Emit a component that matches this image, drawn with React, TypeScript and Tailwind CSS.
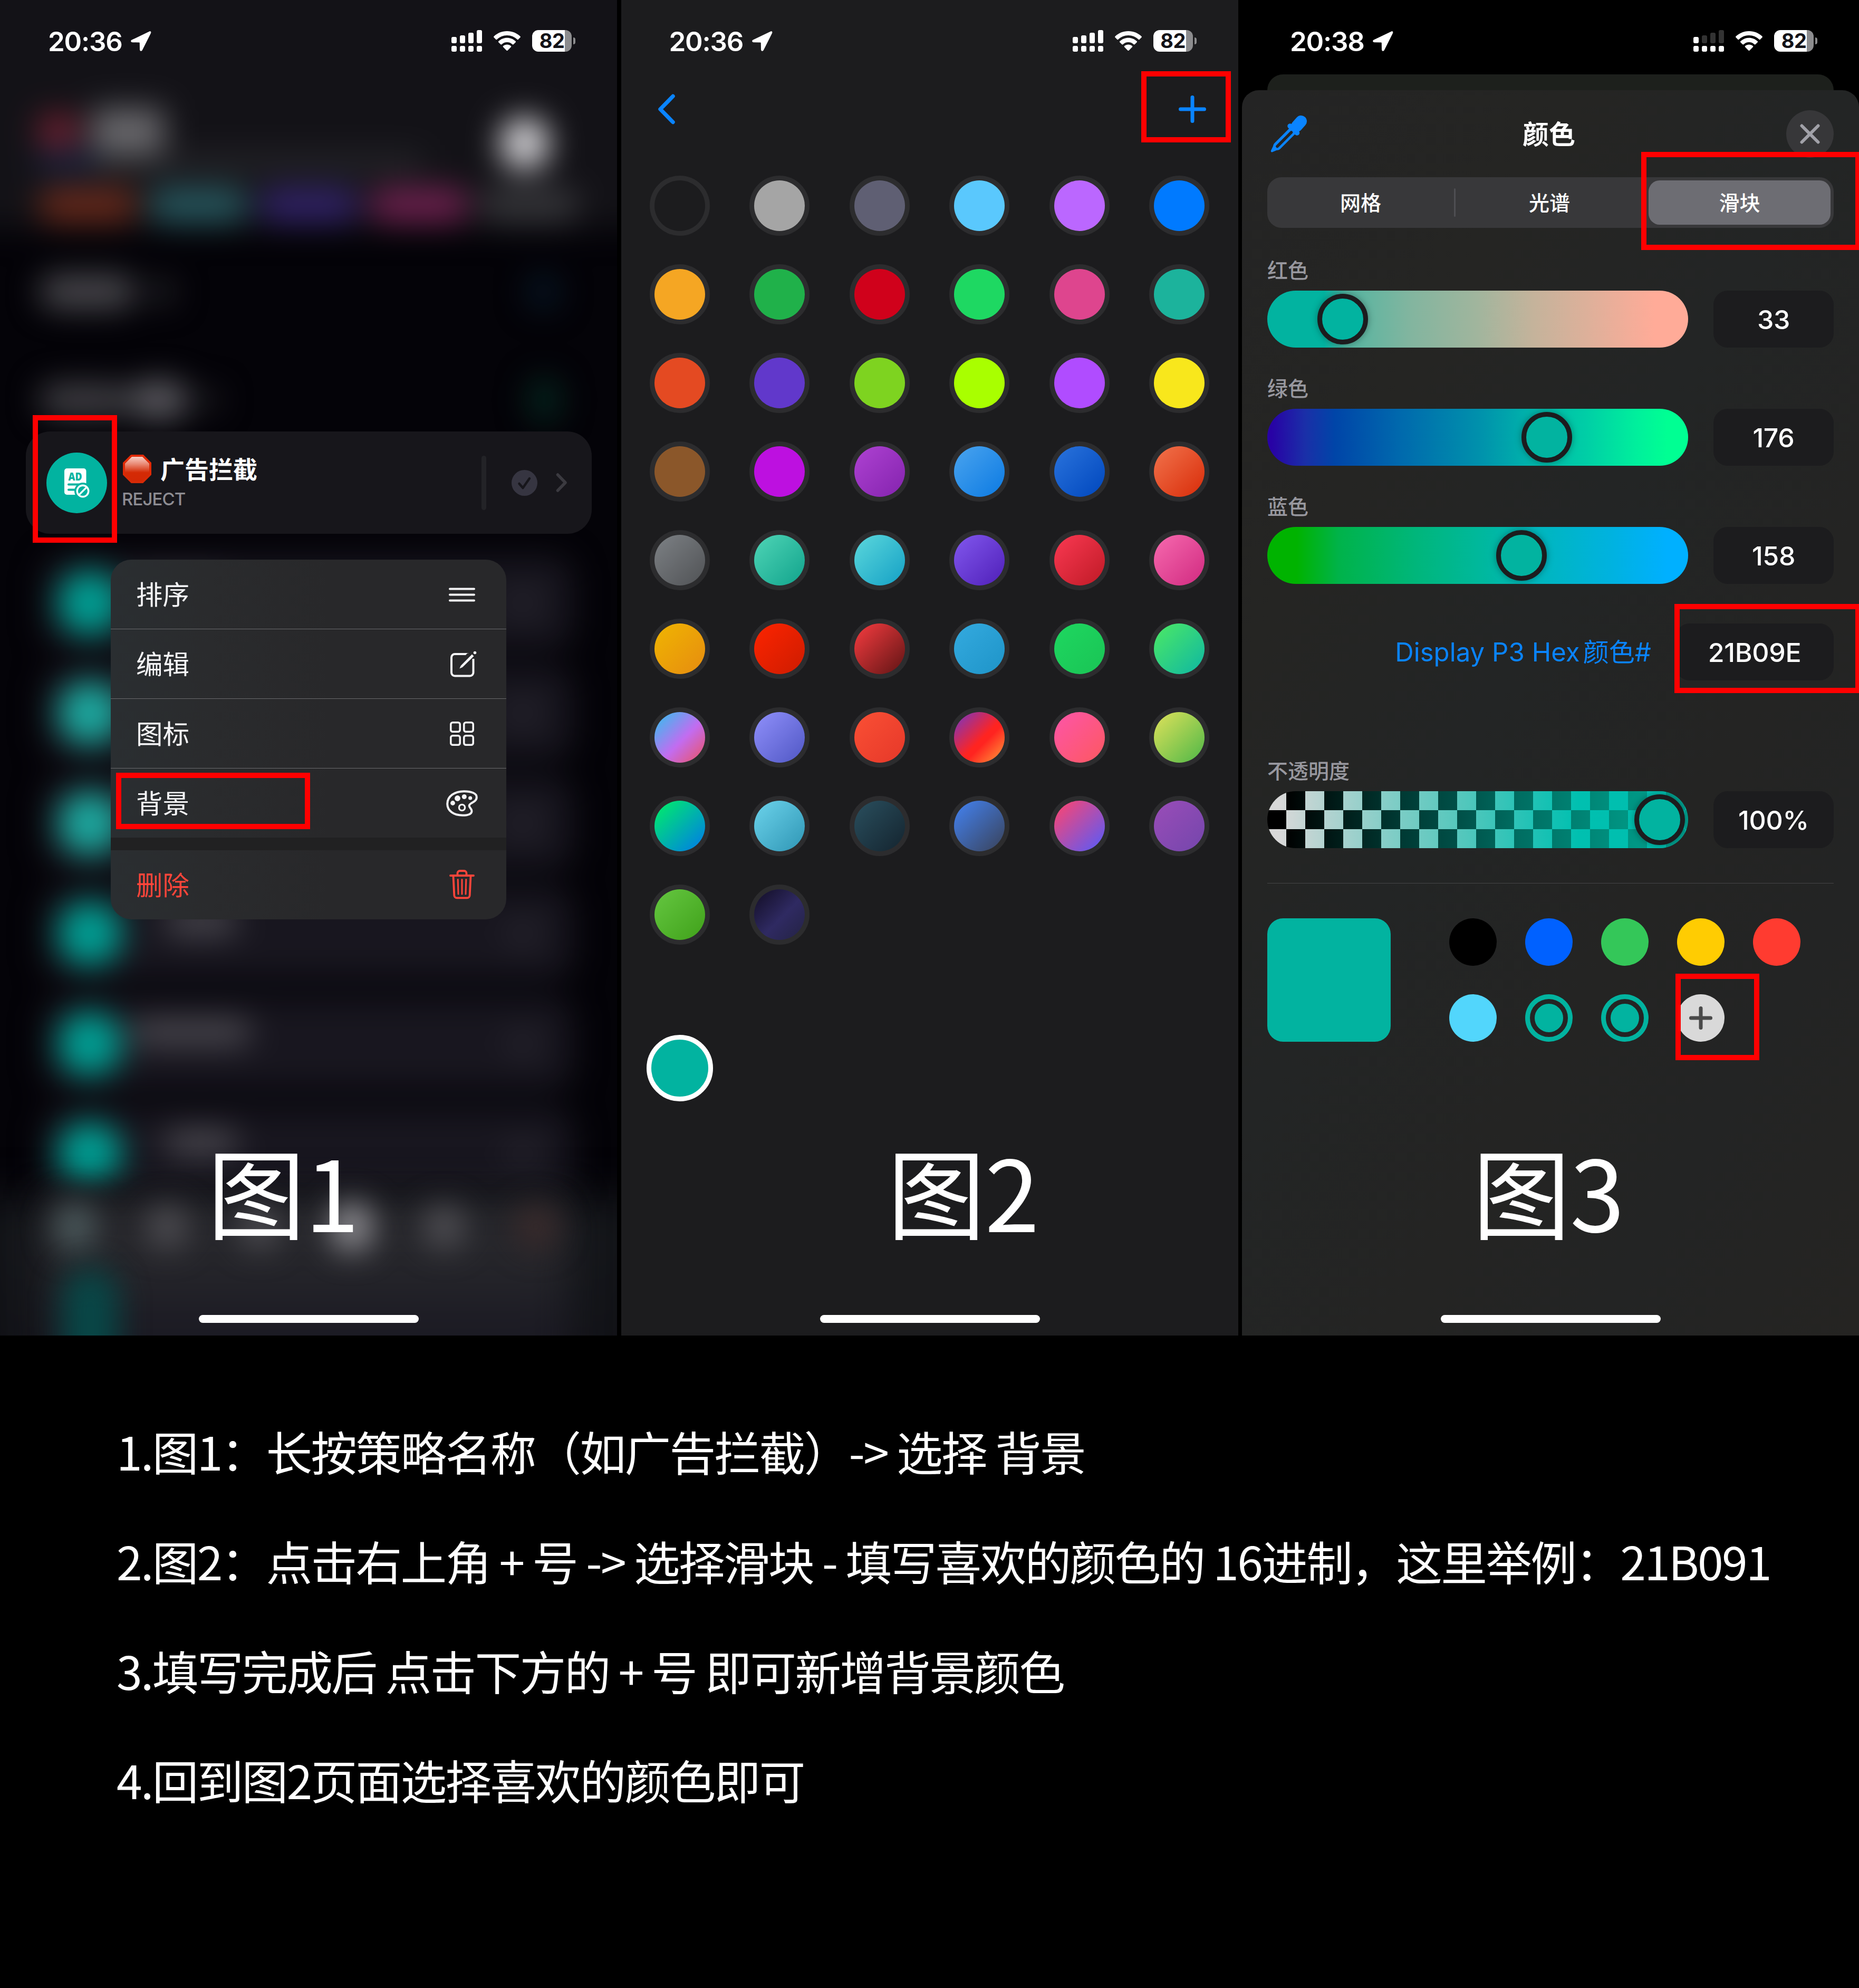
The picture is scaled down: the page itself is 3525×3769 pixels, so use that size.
import React from "react";

const LATIN = "font-['Inter','Noto_Sans_CJK_SC',sans-serif]";
const CJK = "font-['Noto_Sans_CJK_SC',sans-serif]";

function LocationArrow() {
  return (
    <svg className="h-[38px] w-[39px]" viewBox="0 0 39 38" fill="#fff">
      <path d="M35.500.6 2 16.600C-.8 18-.2 21.200 3 21.300l12.500.200c.9 0 1.300.4 1.300 1.300l.2 12.200c.1 3.300 3.500 3.800 4.900 1L38 4C39.200 1.400 37.600-.4 35.500.6Z" />
    </svg>
  );
}

function Signal({ weak }: { weak?: boolean }) {
  const tops = [13, 10, 5, 0];
  return (
    <svg className="h-[41px] w-[58px]" viewBox="0 0 58 41">
      {tops.map((t, i) => (
        <g key={i} fill="#fff">
          <rect x={i * 16} y={t} width="10" height={25 - t} rx="3" fill={weak && i > 0 ? "#333333" : "#fff"} />
          <rect x={i * 16} y="30" width="10" height="11" rx="3" />
        </g>
      ))}
    </svg>
  );
}

function Wifi() {
  return (
    <svg className="h-[37px] w-[51px]" viewBox="0 0 51 37" fill="#fff">
      <path d="M25.500 0C15.900 0 7.100 3.700.7 9.700c-.9.9-.9 1.500-.1 2.300l3.700 3.700c.7.7 1.400.7 2.100.1C11.400 11 18.100 8.100 25.500 8.100s14.100 2.900 19.100 7.700c.7.600 1.400.6 2.100-.1l3.700-3.700c.8-.8.8-1.400-.1-2.300C43.900 3.700 35.100 0 25.500 0Z" />
      <path d="M25.500 12.800c-6.200 0-11.800 2.400-16 6.300-.8.700-.8 1.500-.1 2.200l3.800 3.800c.6.6 1.300.6 2 .1 2.700-2.600 6.300-4.200 10.300-4.200s7.600 1.600 10.300 4.200c.7.500 1.400.5 2-.1l3.800-3.800c.7-.7.7-1.500-.1-2.200-4.200-3.900-9.800-6.300-16-6.300Z" />
      <path d="M25.500 25.500c-2.800 0-5.300 1-7.200 2.600-.8.700-.8 1.400-.1 2.100l6.100 6.200c.8.8 1.600.8 2.400 0l6.100-6.200c.7-.7.700-1.400-.1-2.100-1.900-1.600-4.400-2.600-7.200-2.600Z" />
    </svg>
  );
}

function Battery() {
  return (
    <div className="flex items-center gap-[3px]">
      <div className="flex h-[41px] w-[75px] items-center justify-center rounded-[12px] bg-[linear-gradient(90deg,#fff_62px,#8c8c8e_62px)]">
        <span className="text-[38px] leading-[41px] font-bold tracking-[-0.5px] text-[#131217]">82</span>
      </div>
      <div className="h-[13px] w-[4px] rounded-r-full bg-[#8c8c8e]" />
    </div>
  );
}

function StatusBar({ time, weak }: { time: string; weak?: boolean }) {
  return (
    <div className="flex h-[141px] shrink-0 items-start justify-between pt-[57px] pr-[79px] pl-[91px]">
      <div className="flex h-[42px] items-center">
        <span className="w-[157px] text-[51px] leading-none font-semibold tracking-[-1.200px] text-white">{time}</span>
        <LocationArrow />
      </div>
      <div className="flex h-[41px] items-center">
        <Signal weak={weak} />
        <div className="ml-[22px]">
          <Wifi />
        </div>
        <div className="ml-[22px]">
          <Battery />
        </div>
      </div>
    </div>
  );
}

function Mark({ className }: { className: string }) {
  return <div className={`absolute border-[10px] border-[#ff0000] ${className}`} />;
}

function HomeBar() {
  return <div className="absolute top-[2493px] left-[377px] h-[15px] w-[417px] rounded-full bg-white" />;
}

function FigureLabel({ text, className }: { text: string; className: string }) {
  return (
    <div className={`absolute top-[2161px] text-[186px] leading-[188px] tracking-[-1px] whitespace-nowrap text-white ${CJK} ${className}`}>
      {text}
    </div>
  );
}

/* ---------- Panel 1 ---------- */

function BlurredRow({ text, bright }: { text: string; bright?: boolean }) {
  return (
    <div className="mb-[34px] flex h-[175px] shrink-0 items-center rounded-[40px] bg-[#18161f] pl-[25px]">
      <div className={`h-[122px] w-[122px] rounded-full ${bright ? "bg-[#1ca89f]" : "bg-[#009e93]"}`} />
      <div className={`mb-[44px] h-[50px] rounded-full bg-[#4a484f] ${text}`} />
      <div className="mr-[65px] ml-auto h-[60px] w-[60px] rounded-full bg-[#25232c]" />
    </div>
  );
}

function BlurredPage() {
  return (
    <div className="absolute inset-0 overflow-hidden bg-[#040308]">
      <div className="flex h-[2532px] flex-col blur-[30px]">
        <div className="-mx-[100px] -mt-[100px] flex h-[533px] shrink-0 flex-col bg-[#131217] px-[172px] pt-[308px]">
          <div className="flex h-[82px] items-center">
            <div className="h-[66px] w-[78px] rounded-[20px] bg-[#6b2030]" />
            <div className="ml-[24px] h-[88px] w-[138px] rounded-[14px] bg-[#68676b]" />
            <div className="mt-[46px] mr-[56px] ml-auto h-[100px] w-[94px] shrink-0 rounded-full bg-[#d2d1d5]" />
          </div>
          <div className="flex items-center">
            <div className="h-[38px] w-[110px] bg-[#152340]" />
            <div className="h-[36px] w-[620px] bg-[#26262a]" />
          </div>
          <div className="mt-[28px] flex gap-[20px]">
            <div className="h-[66px] w-[190px] rounded-full bg-[#67291b]" />
            <div className="h-[66px] w-[190px] rounded-full bg-[#27585f]" />
            <div className="h-[66px] w-[190px] rounded-full bg-[#312268]" />
            <div className="h-[66px] w-[190px] rounded-full bg-[#6d204e]" />
            <div className="h-[66px] w-[190px] rounded-full bg-[#353539]" />
          </div>
        </div>
        <div className="flex h-[240px] shrink-0 items-center pl-[75px]">
          <div className="h-[64px] w-[182px] rounded-full bg-[#4a494e]" />
          <div className="ml-[20px] h-[46px] w-[56px] rounded-full bg-[#242328]" />
          <div className="mr-[110px] ml-auto h-[66px] w-[60px] rounded-full bg-[#061726]" />
        </div>
        <div className="flex h-[170px] shrink-0 items-center pl-[75px]">
          <div className="h-[62px] w-[170px] rounded-full bg-[#414045]" />
          <div className="h-[72px] w-[112px] rounded-full bg-[#5c5b61]" />
          <div className="ml-[20px] h-[40px] w-[40px] rounded-full bg-[#242328]" />
          <div className="mr-[108px] ml-auto h-[84px] w-[60px] rounded-full bg-[#05261f]" />
        </div>
        <div className="mx-[84px] flex flex-col pt-[212px]">
          <BlurredRow text="ml-[20px] w-[180px]" />
          <BlurredRow text="ml-[20px] w-[180px]" bright />
          <BlurredRow text="ml-[20px] w-[180px]" bright />
          <BlurredRow text="ml-[80px] w-[140px]" />
          <BlurredRow text="ml-[16px] w-[230px]" />
          <BlurredRow text="ml-[80px] w-[140px]" />
        </div>
      </div>
      <div className="absolute top-[2270px] left-[-60px] h-[400px] w-[1290px] bg-[linear-gradient(180deg,#15171b_0%,#111116_100%)] blur-[40px]" />
      <div className="absolute top-[2275px] left-[80px] h-[380px] w-[1000px] bg-[linear-gradient(180deg,#27272c_0%,#25252a_35%,#1b1a23_65%)] blur-[34px]" />
      <div className="absolute top-[2290px] left-[104px] flex h-[72px] items-center gap-[99px] blur-[30px]">
        <div className="h-[90px] w-[76px] rounded-full bg-[#4f5f61]" />
        <div className="h-[80px] w-[76px] rounded-full bg-[#525156]" />
        <div className="h-[80px] w-[76px] rounded-full bg-[#525156]" />
        <div className="h-[92px] w-[76px] rounded-full bg-[#96959a]" />
        <div className="h-[80px] w-[76px] rounded-full bg-[#545358]" />
        <div className="h-[80px] w-[76px] rounded-full bg-[#3c2b2b]" />
      </div>
      <div className="absolute top-[2405px] left-[118px] h-[240px] w-[106px] rounded-[53px] bg-[#084747] blur-[28px]" />
    </div>
  );
}

function AdIcon() {
  return (
    <div className="flex h-[115px] w-[115px] items-center justify-center rounded-full bg-[#02b3a0]">
      <svg className="h-[115px] w-[115px]" viewBox="0 0 115 115">
        <rect x="34" y="30" width="41.500" height="50" rx="5" fill="#fff" />
        <text x="41.500" y="53" fontSize="21" fontWeight="800" fill="#02b3a0" textLength="26" lengthAdjust="spacingAndGlyphs" fontFamily="Open Sans, sans-serif">
          AD
        </text>
        <path d="M42 60.500h34M42 70.500h20" stroke="#02b3a0" strokeWidth="4" strokeLinecap="round" />
        <circle cx="69" cy="73" r="16" fill="#02b3a0" />
        <circle cx="69" cy="73" r="10.800" fill="none" stroke="#fff" strokeWidth="3.400" />
        <path d="m61.500 80.500 15-15" stroke="#fff" strokeWidth="3.200" />
      </svg>
    </div>
  );
}

function StopSign() {
  return (
    <svg className="h-[54px] w-[54px]" viewBox="0 0 54 54">
      <defs>
        <linearGradient id="stop" x1="0" y1="0" x2="0" y2="1">
          <stop offset="0" stopColor="#f9cdc4" />
          <stop offset=".3" stopColor="#e98a75" />
          <stop offset=".65" stopColor="#d42a05" />
          <stop offset="1" stopColor="#d32805" />
        </linearGradient>
      </defs>
      <path d="M15.800 0h22.400L54 15.800v22.400L38.200 54H15.800L0 38.200V15.800Z" fill="#d82a06" />
      <path d="M17 4h20l13 13v19.500L37 50H17L4 36.500V17Z" fill="url(#stop)" />
      <path d="M15.800 1.500h22.400l14.300 14.300v22M1.500 38V15.800L15.800 1.500" fill="none" stroke="#e22a06" strokeWidth="3" />
    </svg>
  );
}

const ICON = "h-[60px] w-[60px]";

function MenuLines() {
  return (
    <svg className={ICON} viewBox="0 0 60 60" stroke="#f5f5f7" strokeWidth="4" strokeLinecap="round">
      <path d="M7 19.500h46M7 30.500h46M7 41.500h46" />
    </svg>
  );
}

function MenuEdit() {
  return (
    <svg className={ICON} viewBox="0 0 60 60" fill="none" stroke="#f5f5f7" strokeWidth="4">
      <path d="M42 11H16.500a6.500 6.500 0 0 0-6.500 6.500V46a6.500 6.500 0 0 0 6.500 6.500H45a6.500 6.500 0 0 0 6.500-6.500V20" />
      <path d="M36.500 20 44 12" stroke="#29292b" strokeWidth="9" />
      <path d="m49 11.500 3.500 3.500L31 36l-5.700 2.500L27.800 33Z" fill="#f5f5f7" stroke="none" />
      <circle cx="54.500" cy="8.500" r="2.800" fill="#f5f5f7" stroke="none" />
    </svg>
  );
}

function MenuGrid() {
  return (
    <svg className={ICON} viewBox="0 0 60 60" fill="none" stroke="#f5f5f7" strokeWidth="3.600">
      <rect x="8.800" y="8.800" width="17.400" height="17.400" rx="3.500" />
      <rect x="33.800" y="8.800" width="17.400" height="17.400" rx="3.500" />
      <rect x="8.800" y="33.800" width="17.400" height="17.400" rx="3.500" />
      <rect x="33.800" y="33.800" width="17.400" height="17.400" rx="3.500" />
    </svg>
  );
}

function MenuPalette() {
  return (
    <svg className={ICON} viewBox="0 0 60 60" fill="none" stroke="#f5f5f7" strokeWidth="4">
      <path d="M34 7.200C16 7.200 2.200 16.500 2.200 31 2.200 44.500 14.500 52.800 31 52.800c11.500 0 17.500-3 17.500-8.300 0-4.500-4.800-6-4.800-9.700 0-6.800 14.100-5.800 14.100-16.500C57.800 11 47.500 7.200 34 7.200Z" />
      <circle cx="30" cy="38" r="5.600" strokeWidth="3.300" />
      <g fill="#f5f5f7" stroke="none">
        <circle cx="12.500" cy="29.500" r="4.400" />
        <circle cx="21.500" cy="20.500" r="5.400" />
        <circle cx="34.300" cy="17.500" r="4.500" />
        <circle cx="45.700" cy="20" r="3.600" />
      </g>
    </svg>
  );
}

function MenuTrash() {
  return (
    <svg className={ICON} viewBox="0 0 60 60" fill="none" stroke="#ff453a" strokeWidth="3.800" strokeLinecap="round">
      <path d="M8 12h44M21.500 11.500V7.500a4.500 4.500 0 0 1 4.500-4.500h8a4.500 4.500 0 0 1 4.500 4.500v4M13.500 13l1.800 36.500a5 5 0 0 0 5 4.800h19.400a5 5 0 0 0 5-4.800L46.500 13" />
      <path d="m22.200 19.500.8 27.500M30 19.500V47M37.800 19.500 37 47" strokeWidth="3" />
    </svg>
  );
}

function MenuRow({ label, icon, danger, line }: { label: string; icon: React.ReactNode; danger?: boolean; line?: boolean }) {
  return (
    <div className={line ? "border-b border-[#6a6a6d]" : ""}>
      <div className="flex h-[131px] items-center justify-between pr-[54px] pl-[48px]">
        <span className={`pb-[4px] text-[50.500px] leading-none ${CJK} ${danger ? "text-[#ff453a]" : "text-[#f5f5f7]"}`}>{label}</span>
        {icon}
      </div>
    </div>
  );
}

function PanelPolicies() {
  return (
    <div className="relative h-[2532px] w-[1170px] shrink-0 overflow-hidden">
      <BlurredPage />
      <div className="relative flex flex-col">
        <StatusBar time="20:36" />
        <div className="mt-[677px] ml-[49px] flex h-[194px] w-[1073px] items-center rounded-[46px] bg-[#17161b] pr-[46px] pl-[39px]">
          <AdIcon />
          <div className="ml-[30px] flex flex-col">
            <div className="mt-[-6px] flex h-[60px] items-center">
              <StopSign />
              <span className={`ml-[17px] pb-[4px] text-[46px] leading-none font-bold text-white ${CJK}`}>广告拦截</span>
            </div>
            <span className="mt-[8px] ml-[-2px] text-[33px] leading-[38px] font-medium tracking-[-0.9px] text-[#8e8d93]">REJECT</span>
          </div>
          <div className="ml-auto h-[103px] w-[9px] rounded-full bg-[#232327]" />
          <svg className="ml-[48px] h-[49px] w-[49px]" viewBox="0 0 49 49">
            <circle cx="24.500" cy="24.500" r="24.500" fill="#363541" />
            <path d="m14.500 26 7 8L34 16" fill="none" stroke="#17161b" strokeWidth="4.500" strokeLinecap="round" strokeLinejoin="round" />
          </svg>
          <svg className="ml-[35px] h-[36px] w-[22px]" viewBox="0 0 22 36" fill="none">
            <path d="m3.500 3 14.500 15L3.500 33" stroke="#3b3a40" strokeWidth="5.500" strokeLinecap="round" strokeLinejoin="round" />
          </svg>
        </div>
        <div className="mt-[49px] ml-[210px] w-[750px] overflow-hidden rounded-[39px] bg-[linear-gradient(90deg,#2a2e31_0%,#2a2b2d_25%,#28282a_55%,#28282a_100%)]">
          <MenuRow label="排序" icon={<MenuLines />} line />
          <MenuRow label="编辑" icon={<MenuEdit />} line />
          <MenuRow label="图标" icon={<MenuGrid />} line />
          <MenuRow label="背景" icon={<MenuPalette />} />
          <div className="h-[24px] bg-[#212122]" />
          <MenuRow label="删除" icon={<MenuTrash />} danger />
        </div>
      </div>
      <Mark className="top-[787px] left-[62px] h-[242px] w-[160px]" />
      <Mark className="top-[1465px] left-[220px] h-[107px] w-[368px]" />
      <FigureLabel text="图1" className="left-[393px]" />
      <HomeBar />
    </div>
  );
}

/* ---------- Panel 2 ---------- */

const SWATCHES = [
  "bg-[#1c1c1e]", "bg-[#a5a5a5]", "bg-[#5f5f73]", "bg-[#5ac8fd]", "bg-[#bb67ff]", "bg-[#007aff]",
  "bg-[#f5a623]", "bg-[#20b14a]", "bg-[#d0011b]", "bg-[#1ed862]", "bg-[#de458e]", "bg-[#1cb39c]",
  "bg-[#e44a22]", "bg-[#6138cb]", "bg-[#7ed320]", "bg-[#a9ff00]", "bg-[#b04cff]", "bg-[#f8e71c]",
  "bg-[#8b572a]", "bg-[#bd10e0]",
  "bg-[linear-gradient(135deg,#ae42d2_0%,#8423ae_100%)]",
  "bg-[linear-gradient(135deg,#4aa4ef_0%,#0c7ae2_100%)]",
  "bg-[linear-gradient(135deg,#2a73dc_0%,#0047bd_100%)]",
  "bg-[linear-gradient(135deg,#f2734c_0%,#d82c09_100%)]",
  "bg-[linear-gradient(135deg,#7d8185_0%,#505255_100%)]",
  "bg-[linear-gradient(135deg,#4fd5b6_0%,#11a38c_100%)]",
  "bg-[linear-gradient(135deg,#5cd8dc_0%,#14a0c5_100%)]",
  "bg-[linear-gradient(135deg,#8258ee_0%,#4f1fb8_100%)]",
  "bg-[linear-gradient(135deg,#fa3952_0%,#bf1a26_100%)]",
  "bg-[linear-gradient(135deg,#f76aaf_0%,#d02a80_100%)]",
  "bg-[linear-gradient(135deg,#f0b501_0%,#e68c10_100%)]",
  "bg-[linear-gradient(135deg,#fd2400_0%,#cd1c00_100%)]",
  "bg-[linear-gradient(135deg,#f03a3e_5%,#661616_95%)]",
  "bg-[linear-gradient(135deg,#34aadf_0%,#1e94c8_100%)]",
  "bg-[linear-gradient(135deg,#1ed760_0%,#1ac455_100%)]",
  "bg-[linear-gradient(135deg,#4ae767_5%,#11b9a0_95%)]",
  "bg-[linear-gradient(135deg,#39bdef_5%,#c26cf0_55%,#e8556f_95%)]",
  "bg-[linear-gradient(135deg,#9090fb_0%,#5057c4_100%)]",
  "bg-[linear-gradient(135deg,#fa5035_0%,#e63829_100%)]",
  "bg-[linear-gradient(135deg,#7d35bd_5%,#ff2420_54%,#ff2420_60%,#ff9238_95%)]",
  "bg-[linear-gradient(135deg,#fd55a9_0%,#fd5860_100%)]",
  "bg-[linear-gradient(135deg,#d9e05a_5%,#55b948_95%)]",
  "bg-[linear-gradient(135deg,#00ec6a_5%,#007ee6_95%)]",
  "bg-[linear-gradient(135deg,#6cd3eb_0%,#2f96b5_100%)]",
  "bg-[linear-gradient(135deg,#2a4f5e_0%,#14242f_100%)]",
  "bg-[linear-gradient(135deg,#4380ec_5%,#3a4560_95%)]",
  "bg-[linear-gradient(135deg,#fb4572_5%,#5c5af5_95%)]",
  "bg-[linear-gradient(135deg,#9a4db8_0%,#7446ac_100%)]",
  "bg-[linear-gradient(135deg,#65c741_0%,#40a11a_100%)]",
  "bg-[linear-gradient(135deg,#17122f_10%,#2f2a62_55%,#26244a_90%)]",
];

function PanelSwatches() {
  return (
    <div className="relative flex h-[2532px] w-[1170px] shrink-0 flex-col overflow-hidden bg-[#1c1c1e]">
      <StatusBar time="20:36" />
      <div className="flex h-[132px] items-center justify-between pr-[60px] pl-[68px]">
        <svg className="h-[60px] w-[36px]" viewBox="0 0 36 60" fill="none">
          <path d="M30 5.500 6 30l24 24.500" stroke="#0a84ff" strokeWidth="7.500" strokeLinecap="round" strokeLinejoin="round" />
        </svg>
        <svg className="h-[54px] w-[54px]" viewBox="0 0 54 54" fill="none">
          <path d="M27 4.500v45M4.500 27h45" stroke="#0a84ff" strokeWidth="7" strokeLinecap="round" />
        </svg>
      </div>
      <div className="mt-[60px] grid grid-cols-[repeat(6,114px)] justify-between gap-y-[54px] px-[54px]">
        {SWATCHES.map((c, i) => (
          <div key={i} className="flex h-[114px] w-[114px] items-center justify-center rounded-full bg-[#2c2c2e]">
            <div className={`h-[96px] w-[96px] rounded-full ${c}`} />
          </div>
        ))}
      </div>
      <div className="mt-[171px] ml-[48px] h-[126px] w-[126px] rounded-full border-[9px] border-white bg-[#02b3a0]" />
      <Mark className="top-[135px] left-[986px] h-[135px] w-[170px]" />
      <FigureLabel text="图2" className="left-[505px]" />
      <HomeBar />
    </div>
  );
}

/* ---------- Panel 3 ---------- */

function Eyedropper() {
  return (
    <svg className="h-[72px] w-[72px]" viewBox="0 0 72 72" fill="none" strokeLinecap="round">
      <path d="M58 12 50 21" stroke="#0a84ff" strokeWidth="22" />
      <path d="M37 21 50.500 34" stroke="#0a84ff" strokeWidth="9.500" />
      <path d="m44 28-31 31" stroke="#0a84ff" strokeWidth="15.500" />
      <path d="M6 57 1 67.500c-.8 1.800.8 3.600 2.700 2.800L15 65.500Z" fill="#0a84ff" />
      <path d="M39.500 33 13 59.500" stroke="#242424" strokeWidth="5.500" />
    </svg>
  );
}

function ValueBox({ text, className }: { text: string; className?: string }) {
  return (
    <div className={`flex h-[108px] items-center justify-center rounded-[27px] bg-[#1c1c1e] pt-[2px] text-[50px] font-medium tracking-[-0.3px] text-white ${className ?? "w-[228px]"}`}>
      {text}
    </div>
  );
}

function Slider({ label, value, track, thumb, checker }: { label: string; value: string; track: string; thumb: string; checker?: boolean }) {
  return (
    <div className="flex flex-col">
      <div className={`h-[65px] text-[39px] leading-[48px] font-medium text-[#98989f] ${CJK}`}>{label}</div>
      <div className="flex justify-between">
        <div className={`relative flex h-[108px] w-[798px] items-center overflow-hidden rounded-full ${track}`}>
          {checker && (
            <div className="absolute inset-0 bg-[linear-gradient(90deg,#d8d8d8_3%,#bcd4d2_11%,#7fcdc6_30%,#52c7bc_47%,#20c2b5_63%,#00c0b0_74%,#00bdae_100%)] [mask-image:conic-gradient(transparent_25%,#000_0_50%,transparent_0_75%,#000_0)] [mask-size:72px_72px]" />
          )}
          <div className={`relative h-[96px] w-[96px] shrink-0 rounded-full border-[9px] border-[#1c1c1e] bg-[#02b3a0] shadow-[0_0_14px_rgba(0,0,0,0.35)] ${thumb}`} />
        </div>
        <ValueBox text={value} />
      </div>
    </div>
  );
}

function PaletteDot({ className, ring }: { className: string; ring?: boolean }) {
  return (
    <div className={`flex h-[90px] w-[90px] items-center justify-center rounded-full ${className}`}>
      {ring && <div className="h-[72px] w-[72px] rounded-full border-[9px] border-[#242424]" />}
    </div>
  );
}

function PanelPicker() {
  return (
    <div className="relative flex h-[2532px] w-[1170px] shrink-0 flex-col overflow-hidden bg-black">
      <StatusBar time="20:38" weak />
      <div className="mx-[48px] h-[30px] shrink-0 rounded-t-[30px] bg-[#1d201c]" />
      <div className="flex flex-1 flex-col rounded-t-[32px] bg-[#242424] bg-[linear-gradient(120deg,#242424_0%,#252523_25%,#232525_45%,#242423_65%,#232424_80%,#252422_100%)] px-[48px] pt-[36px]">
        <div className="flex h-[93px] items-center justify-between">
          <div className="w-[90px] pl-[6px]">
            <Eyedropper />
          </div>
          <span className={`pr-[6px] pb-[6px] text-[50px] leading-none font-bold text-white ${CJK}`}>颜色</span>
          <div className="flex h-[90px] w-[90px] items-center justify-center rounded-full bg-[#373739]">
            <svg className="h-[40px] w-[40px]" viewBox="0 0 40 40">
              <path d="M4.500 4.500l31 31M35.500 4.500l-31 31" stroke="#a1a1a8" strokeWidth="6" strokeLinecap="round" />
            </svg>
          </div>
        </div>
        <div className={`mt-[36px] flex h-[96px] shrink-0 items-center rounded-[27px] bg-[#38383a] text-[39px] leading-[54px] font-medium text-white ${CJK}`}>
          <div className="w-[354px] pb-[5px] text-center">网格</div>
          <div className="h-[54px] w-[3px] rounded-full bg-[#4e4e52]" />
          <div className="w-[356px] pb-[5px] text-center">光谱</div>
          <div className="ml-[10px] flex h-[84px] w-[345px] items-center justify-center rounded-[21px] bg-[#6d6d73] pb-[5px]">滑块</div>
        </div>
        <div className="mt-[54px] flex flex-col gap-[51px]">
          <Slider
            label="红色"
            value="33"
            thumb="ml-[95px]"
            track="bg-[linear-gradient(90deg,#02b3a0_13.5%,#55b5a1_19%,#82b59f_34%,#a1b59d_50%,#c4b39b_63%,#ddb09a_76%,#ffab98_92%)]"
          />
          <Slider
            label="绿色"
            value="176"
            thumb="ml-[482px]"
            track="bg-[linear-gradient(90deg,#2802a5_1%,#1a2fa8_9%,#0045a8_16%,#0068ad_31%,#0090ac_50%,#00b2ab_62%,#00cfa6_76%,#00f09c_88%,#00ff93_95%)]"
          />
          <Slider
            label="蓝色"
            value="158"
            thumb="ml-[434px]"
            track="bg-[linear-gradient(90deg,#00b300_7%,#00b34a_17%,#00b67a_35%,#00b89b_50%,#00b6bf_65%,#00b2e0_82%,#00b0ff_95%)]"
          />
        </div>
        <div className="mt-[75px] flex items-center justify-end gap-[46px]">
          <span className="pt-[2px] text-[49px] tracking-[0.100px] whitespace-nowrap text-[#0a84ff]">
            Display P3 Hex<span className="ml-[6px]">颜色#</span>
          </span>
          <ValueBox text="21B09E" className="w-[300px]" />
        </div>
        <div className="mt-[145px]">
          <Slider
            label="不透明度"
            value="100%"
            thumb="ml-[696px]"
            checker
            track="bg-[linear-gradient(90deg,#000000_4%,#001a17_16%,#003a34_32%,#004f47_45%,#006e62_60%,#008172_73%,#009482_85%,#00a291_100%)]"
          />
        </div>
        <div className="mt-[66px] h-[1px] shrink-0 bg-[#454547]" />
        <div className="mt-[66px] flex">
          <div className="h-[234px] w-[234px] rounded-[30px] bg-[#02b3a0]" />
          <div className="ml-[111px] grid grid-cols-[repeat(5,90px)] gap-[54px]">
            <PaletteDot className="bg-black" />
            <PaletteDot className="bg-[#0061ff]" />
            <PaletteDot className="bg-[#34c759]" />
            <PaletteDot className="bg-[#ffcc02]" />
            <PaletteDot className="bg-[#ff3b30]" />
            <PaletteDot className="bg-[#52d6fc]" />
            <PaletteDot className="bg-[#02b3a0]" ring />
            <PaletteDot className="bg-[#02b3a0]" ring />
            <div className="flex h-[90px] w-[90px] items-center justify-center rounded-full bg-[#d9d9d9]">
              <svg className="h-[46px] w-[46px]" viewBox="0 0 46 46">
                <path d="M23 4.500v37M4.500 23h37" stroke="#4a4a4a" strokeWidth="7" strokeLinecap="round" />
              </svg>
            </div>
          </div>
        </div>
      </div>
      <Mark className="top-[288px] left-[757px] h-[186px] w-[416px]" />
      <Mark className="top-[1145px] left-[820px] h-[169px] w-[353px]" />
      <Mark className="top-[1846px] left-[822px] h-[164px] w-[159px]" />
      <FigureLabel text="图3" className="left-[437px]" />
      <HomeBar />
    </div>
  );
}

const STEPS = [
  "1.图1：长按策略名称（如广告拦截）-> 选择 背景",
  "2.图2：点击右上角 + 号 -> 选择滑块 - 填写喜欢的颜色的 16进制，这里举例：21B091",
  "3.填写完成后 点击下方的 + 号 即可新增背景颜色",
  "4.回到图2页面选择喜欢的颜色即可",
];

export default function App() {
  return (
    <div className={`flex h-[3769px] w-[3525px] flex-col overflow-hidden bg-black ${LATIN}`}>
      <div className="flex justify-between">
        <PanelPolicies />
        <PanelSwatches />
        <PanelPicker />
      </div>
      <div className={`pt-[114px] pl-[221px] text-[87.700px] leading-[207.8px] tracking-[-2.700px] text-white ${CJK}`}>
        {STEPS.map((s) => (
          <p key={s} className="whitespace-nowrap">
            {s}
          </p>
        ))}
      </div>
    </div>
  );
}
